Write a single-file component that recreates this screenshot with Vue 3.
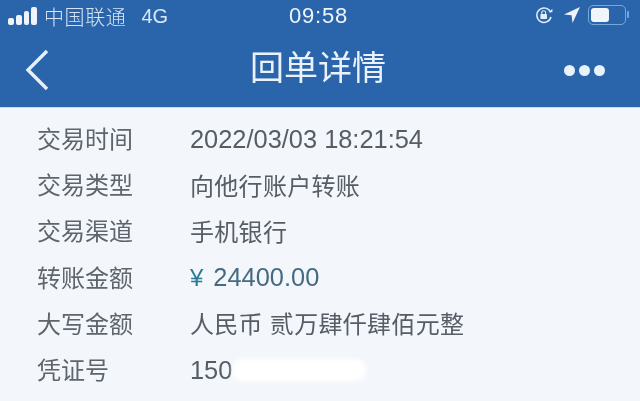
<script setup>
const rows = [
  { label: '交易时间', value: '2022/03/03 18:21:54', latin: true },
  { label: '交易类型', value: '向他行账户转账' },
  { label: '交易渠道', value: '手机银行' },
  { label: '转账金额', value: '24400.00', amount: true, latin: true },
  { label: '大写金额', value: '人民币 贰万肆仟肆佰元整' },
  { label: '凭证号', value: '150', masked: true, latin: true },
]
</script>

<template>
  <div class="screen">
    <header class="header">
      <div class="status">
        <div class="status-left">
          <div class="signal"><i class="b1"></i><i class="b2"></i><i class="b3"></i><i class="b4"></i></div>
          <span class="carrier">中国联通</span>
          <span class="net">4G</span>
        </div>
        <span class="clock">09:58</span>
        <div class="status-right">
          <svg class="lock" width="20" height="20" viewBox="0 0 20 20" fill="none">
            <path d="M16.6 7.2A7.2 7.2 0 1 0 17 12" stroke="#e4eef8" stroke-width="1.5"/>
            <path d="M14.8 7.2h3.6V3.8z" fill="#e4eef8"/>
            <rect x="6.4" y="9" width="6.6" height="5" rx=".8" fill="#e4eef8"/>
            <path d="M7.8 9V7.6a1.9 1.9 0 0 1 3.8 0V9" stroke="#e4eef8" stroke-width="1.1"/>
          </svg>
          <svg class="arrow" width="18" height="18" viewBox="0 0 18 18"><path d="M17 1 1 8.4l7.6.9.9 7.7z" fill="#eef4fa"/></svg>
          <div class="battery"><div class="charge"></div></div>
          <i class="nub"></i>
        </div>
      </div>
      <nav class="nav">
        <svg class="back" width="26" height="44" viewBox="0 0 26 44" fill="none"><path d="M23 2 4 21 23 40" stroke="#e6f0fa" stroke-width="3.4"/></svg>
        <h1 class="title">回单详情</h1>
        <div class="dots"><i></i><i></i><i></i></div>
      </nav>
    </header>
    <main class="list">
      <div v-for="row in rows" :key="row.label" class="row">
        <span class="label">{{ row.label }}</span>
        <span class="value" :class="{ amount: row.amount, latin: row.latin }"><span v-if="row.amount" class="yen">¥</span><span>{{ row.value }}</span><span v-if="row.masked" class="mask"></span></span>
      </div>
    </main>
  </div>
</template>

<style>
html, body { margin: 0; background: #f3f7fb; }
</style>

<style scoped>
.screen {
  width: 640px;
  height: 401px;
  overflow: hidden;
  background: #f3f7fb;
  font-family: "Liberation Sans", "Noto Sans CJK SC", sans-serif;
  filter: blur(.4px);
}
.header {
  height: 107px;
  background: #2a65ac;
  color: #e8f1fa;
  border-bottom: 1px solid #c9dcec;
}
.status {
  position: relative;
  height: 32px;
  display: flex;
  align-items: center;
  justify-content: space-between;
  padding: 0 11px 0 8px;
}
.status-left { display: flex; align-items: center; }
.signal { display: flex; align-items: flex-end; gap: 2px; height: 18px; margin-top: -1px; }
.signal i { width: 5.75px; background: #eef4fa; border-radius: 2px; }
.b1 { height: 7px; }
.b2 { height: 10px; }
.b3 { height: 14px; }
.b4 { height: 18px; }
.carrier { margin-left: 7px; font-size: 20px; letter-spacing: .6px; color: #d4e4f4; font-weight: 300; }
.net { margin-left: 15px; font-size: 20px; color: #d9e7f5; }
.clock {
  position: absolute;
  left: 289px;
  top: 3px;
  font-size: 22px;
  line-height: 26px;
  letter-spacing: .8px;
  color: #f0f5fa;
}
.status-right { display: flex; align-items: center; margin-top: -3px; }
.lock { margin-right: 9px; }
.arrow { margin-right: 7px; }
.battery {
  width: 32px;
  height: 14px;
  border: 1.5px solid #7ba6da;
  border-radius: 5px;
  padding: 2px;
}
.charge { width: 18px; height: 14px; background: #f0f5fa; border-radius: 3px; }
.nub { width: 2px; height: 7px; margin-left: 1px; background: #7ba6da; border-radius: 1px; }
.nav {
  height: 75px;
  position: relative;
  display: flex;
  align-items: center;
  justify-content: space-between;
  padding: 0 35px 0 24px;
}
.back { margin-top: 3px; }
.title {
  position: absolute;
  left: 250px;
  top: 13px;
  margin: 0;
  font-size: 34px;
  line-height: 46px;
  font-weight: 400;
  color: #e9f2fa;
}
.dots { display: flex; gap: 4px; margin-top: 2px; }
.dots i { width: 11px; height: 11px; border-radius: 50%; background: #e9f2fa; }
.list { padding-top: 8px; }
.row {
  height: 46.2px;
  display: flex;
  align-items: center;
  padding-left: 37px;
  font-size: 24px;
  color: #565d66;
}
.label { width: 153px; flex: none; margin-top: -3px; color: #5e656d; }
.value { display: flex; align-items: center; margin-top: -2px; letter-spacing: .3px; }
.latin { margin-top: 0; letter-spacing: 0; font-size: 25.4px; }
.amount { color: #466b80; }
.yen { color: #2a7a96; margin-right: 10px; font-size: 24px; }
.mask {
  width: 134px;
  height: 22px;
  border-radius: 10px;
  background: #fff;
  filter: blur(2px);
}
</style>
